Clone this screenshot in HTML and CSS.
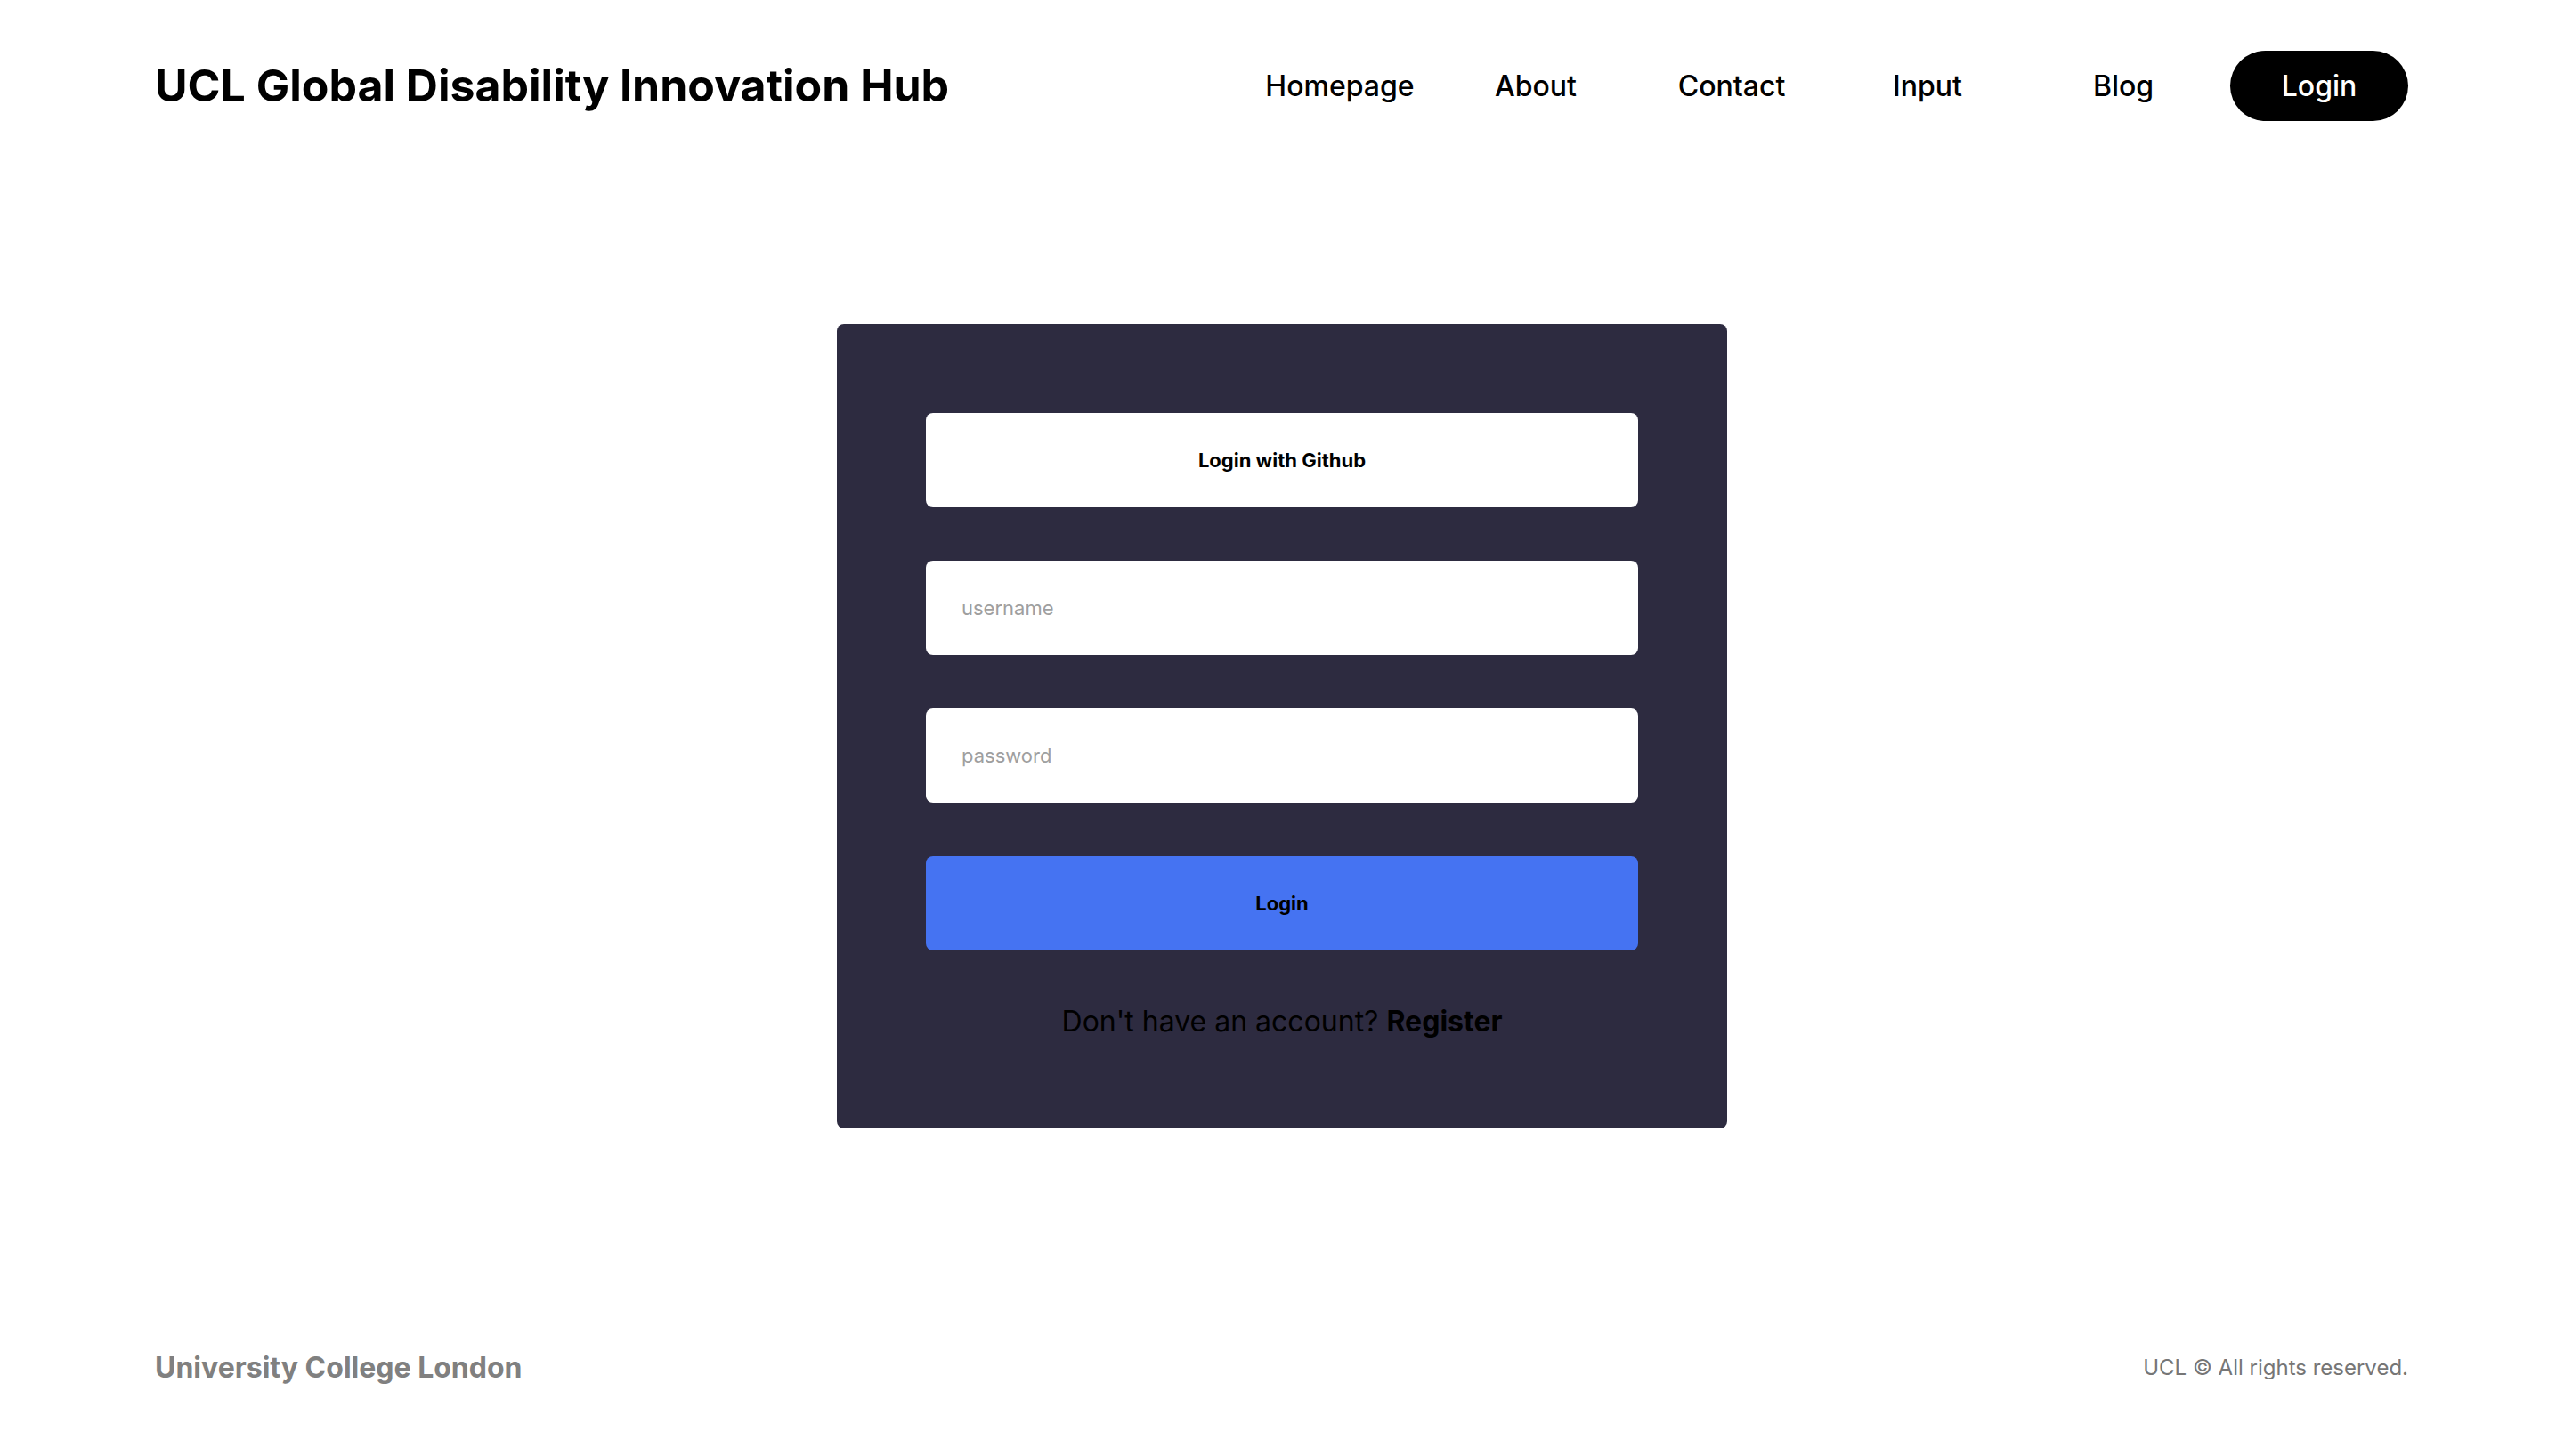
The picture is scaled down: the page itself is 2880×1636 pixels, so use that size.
FILE: index.html
```html
<!DOCTYPE html>
<html lang="en">
<head>
<meta charset="utf-8">
<title>UCL Global Disability Innovation Hub - Login</title>
<link rel="stylesheet" href="styles.css">
</head>
<body>
<div class="page">
  <header class="header">
    <h1 class="brand">UCL Global Disability Innovation Hub</h1>
    <nav class="nav">
      <a class="nav-item" href="#">Homepage</a>
      <a class="nav-item" href="#">About</a>
      <a class="nav-item" href="#">Contact</a>
      <a class="nav-item" href="#">Input</a>
      <a class="nav-item" href="#">Blog</a>
      <a class="nav-item nav-login" href="#">Login</a>
    </nav>
  </header>
  <main class="main">
    <form class="card">
      <button type="button" class="btn btn-github">Login with Github</button>
      <input class="field" type="text" placeholder="username">
      <input class="field" type="password" placeholder="password">
      <button type="button" class="btn btn-login">Login</button>
      <p class="register">Don't have an account? <strong>Register</strong></p>
    </form>
  </main>
  <footer class="footer">
    <span class="footer-brand">University College London</span>
    <span class="footer-copy">UCL © All rights reserved.</span>
  </footer>
</div>
</body>
</html>
```
FILE: styles.css
```css
* { box-sizing: border-box; }
html, body { margin: 0; padding: 0; }
body {
  font-family: Inter, "Noto Sans", "Liberation Sans", sans-serif;
  color: #000;
  background: #fff;
}
.page {
  min-height: 100vh;
  display: flex;
  flex-direction: column;
}
.header {
  height: 192px;
  padding: 0 175px 0 174px;
  display: flex;
  align-items: center;
  justify-content: space-between;
}
.brand {
  margin: 0;
  font-size: 50px;
  font-weight: 700;
  letter-spacing: 0;
}
.nav {
  display: flex;
  align-items: center;
  gap: 20px;
}
.nav-item {
  width: 200px;
  height: 79px;
  display: flex;
  align-items: center;
  justify-content: center;
  font-size: 32px;
  font-weight: 500;
  color: #000;
  text-decoration: none;
}
.nav-login {
  background: #000;
  color: #fff;
  border-radius: 40px;
}
.main {
  flex: 1;
  display: flex;
  justify-content: center;
  align-items: flex-start;
  padding-top: 172px;
}
.card {
  width: 1000px;
  background: #2d2b40;
  border-radius: 8px;
  padding: 100px 100px 100px;
  display: flex;
  flex-direction: column;
  gap: 60px;
}
.btn, .field {
  height: 106px;
  width: 100%;
  border: none;
  border-radius: 8px;
  font-family: Inter, "Noto Sans", sans-serif;
  font-size: 22px;
}
.btn {
  font-weight: 700;
  color: #000;
}
.btn-github { background: #fff; }
.btn-login { background: #4573f2; }
.field {
  background: #fff;
  padding: 0 40px;
  color: #000;
}
.field::placeholder { color: #9f9f9f; }
.register {
  margin: 0;
  text-align: center;
  font-size: 32px;
  line-height: 40px;
  color: #000;
}
.register strong { font-weight: 700; }
.footer {
  height: 200px;
  padding: 0 175px 0 174px;
  display: flex;
  align-items: center;
  justify-content: space-between;
  color: #808080;
}
.footer-brand {
  font-size: 32px;
  font-weight: 700;
}
.footer-copy {
  font-size: 24px;
  color: #767676;
}
```
